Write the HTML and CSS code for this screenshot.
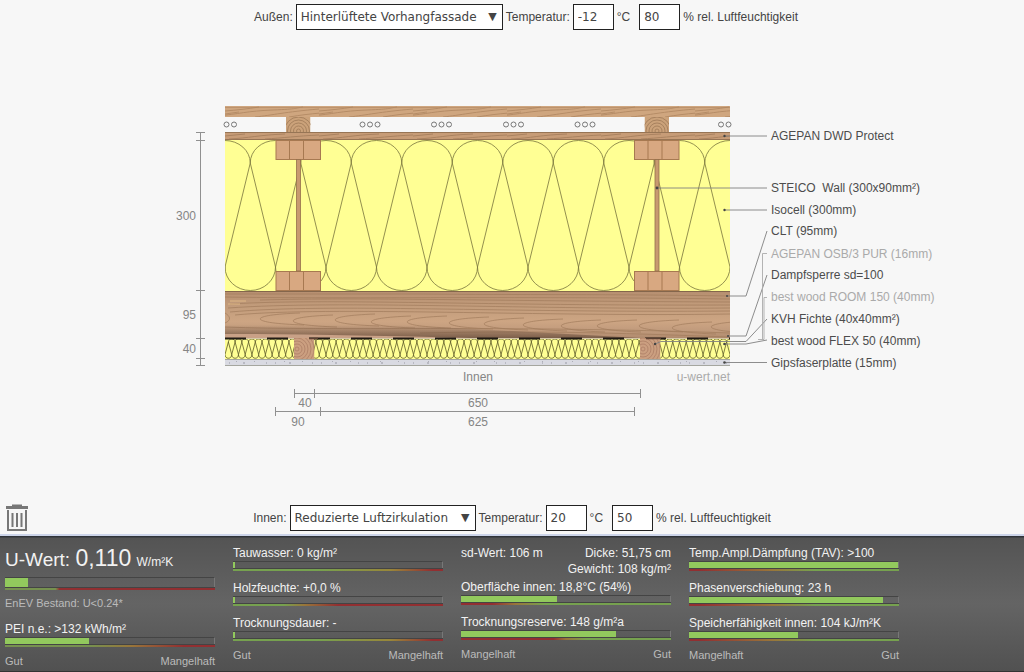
FILE: index.html
```html
<!DOCTYPE html>
<html lang="de">
<head>
<meta charset="utf-8">
<title>U-Wert-Rechner</title>
<link rel="stylesheet" href="styles.css">
</head>
<body>
<form class="climate climate-outside">
  <label for="out-type">Außen:</label>
  <span class="select select-outside"><select id="out-type"><option>Hinterlüftete Vorhangfassade</option></select><span class="arrow" aria-hidden="true">▼</span></span>
  <label for="out-temp">Temperatur:</label>
  <input id="out-temp" type="text" value="-12"><span class="unit">°C</span>
  <input id="out-hum" type="text" value="80"><label for="out-hum">% rel. Luftfeuchtigkeit</label>
</form>

<main class="stage">
<svg class="section" viewBox="64 95 896 340" role="img" aria-label="Querschnitt des Bauteils">
  <defs>
    <path id="loop" d="M0 127A25.250 23.500 0 0 0 50.500 127L25.250 23L0 127M25.250 23A25.250 22.500 0 0 1 75.750 23"/>
    <path id="flex" d="M0 16.500C0 21.500 6.733 21.500 6.733 16.500L3.367 4L0 16.500M3.367 4C3.367 0 10.100 0 10.100 4"/>
    <g id="flex5"><use href="#flex"/><use href="#flex" x="6.733"/><use href="#flex" x="13.467"/><use href="#flex" x="20.200"/><use href="#flex" x="26.933"/></g>
    <g id="flex25"><use href="#flex5"/><use href="#flex5" x="33.667"/><use href="#flex5" x="67.333"/><use href="#flex5" x="101"/><use href="#flex5" x="134.667"/></g>
    <clipPath id="isoClip"><rect x="225" y="140" width="505" height="151"/></clipPath>
    <clipPath id="flexClip"><rect x="225" y="338" width="505" height="21"/></clipPath>
    <pattern id="grain" patternUnits="userSpaceOnUse" x="225" y="106" width="94" height="11">
      <rect width="94" height="11" fill="#cfa67f"/>
      <path d="M0 1.500H94" stroke="#bd936d"/>
      <path d="M-8 10C14 8 22 5 48 4S70 2 78 1M30 11C48 9 60 6 94 3M64 11C76 9 84 8 96 7M0 5C12 4 22 3 34 1M0 8L14 6" fill="none" stroke="#ae8560" stroke-width=".8"/>
    </pattern>
    <pattern id="grainFine" patternUnits="userSpaceOnUse" x="225" y="132" width="94" height="8">
      <rect width="94" height="8" fill="#c79c77"/>
      <path d="M0 .5H94M0 7.500H94" stroke="#977555" stroke-width="1"/>
      <path d="M4 7C24 6 34 3 60 2M40 7C58 6 72 4 94 3M0 4L20 2" fill="none" stroke="#a27b59" stroke-width=".8"/>
    </pattern>
    <linearGradient id="clt" x2="0" y2="1">
      <stop offset="0" stop-color="#b68f70"/><stop offset=".35" stop-color="#c39d7c"/>
      <stop offset=".65" stop-color="#cda583"/><stop offset=".85" stop-color="#c09a7c"/>
      <stop offset="1" stop-color="#b08a6d"/>
    </linearGradient>
    <linearGradient id="shade" x2="0" y2="1">
      <stop offset="0" stop-color="#6d5240" stop-opacity="0"/><stop offset="1" stop-color="#6d5240" stop-opacity=".75"/>
    </linearGradient>
    <clipPath id="cltClip"><rect x="225" y="291" width="505" height="47"/></clipPath>
    <g id="tongue"><path d="M0 0C1-3 14-5 40-6M0 0C2 3 16 5 44 6"/></g>
    <g id="batten">
      <rect width="24.500" height="15" fill="#cba27a"/>
      <g fill="none" stroke="#a37e5b" stroke-width=".9"><circle cx="12.500" cy="14" r="2"/><circle cx="12.500" cy="14" r="5"/><circle cx="12.500" cy="14" r="8"/><circle cx="12.500" cy="14" r="11"/><circle cx="12.500" cy="14" r="14"/></g>
    </g>
    <clipPath id="battenClip"><rect width="24.500" height="15"/></clipPath>
    <g id="kvh">
      <rect width="20.500" height="21" fill="#cb9f80"/>
      <g fill="none" stroke="#ad7f66" stroke-width=".8"><circle cx="3" cy="11" r="2"/><circle cx="3" cy="11" r="5"/><circle cx="3" cy="11" r="8"/><circle cx="3" cy="11" r="11"/><circle cx="3" cy="11" r="14"/><circle cx="3" cy="11" r="17"/></g>
    </g>
    <clipPath id="kvhClip"><rect width="20.500" height="21"/></clipPath>
    <g id="flange">
      <rect x=".5" y=".5" width="44.500" height="19" fill="#d8a881" stroke="#a77951"/>
      <path d="M14 0V19M28 0V19" stroke="#a77951"/>
    </g>
    <g id="joist">
      <use href="#flange"/><use href="#flange" y="131"/>
      <rect x="21" y="19.500" width="4" height="111.500" fill="#c89a70" stroke="#95704b" stroke-width=".8"/>
    </g>
    <g id="vents"><circle r="2.500"/><circle cx="7.500" r="2.500"/></g>
    <g id="vents3"><use href="#vents"/><circle cx="15" r="2.500"/></g>
  </defs>

  <rect x="225" y="106" width="505" height="11" fill="url(#grain)"/>
  <g fill="none" stroke="#777" stroke-width="1">
    <use href="#vents" x="226.500" y="124.500"/><use href="#vents3" x="362.500" y="124.500"/>
    <use href="#vents3" x="434" y="124.500"/><use href="#vents3" x="506" y="124.500"/>
    <use href="#vents3" x="577.500" y="124.500"/><use href="#vents" x="721" y="124.500"/>
  </g>
  <g transform="translate(286 117)" clip-path="url(#battenClip)"><use href="#batten"/></g>
  <g transform="translate(644.500 117)" clip-path="url(#battenClip)"><use href="#batten"/></g>
  <rect x="225" y="132" width="505" height="8" fill="url(#grainFine)"/>
  <rect x="225" y="140" width="505" height="151" fill="#ffff94"/>
  <g clip-path="url(#isoClip)" fill="none" stroke="#77733c" stroke-width=".8">
    <use href="#loop" x="174.500" y="140"/><use href="#loop" x="225" y="140"/><use href="#loop" x="275.500" y="140"/><use href="#loop" x="326" y="140"/><use href="#loop" x="376.500" y="140"/><use href="#loop" x="427" y="140"/><use href="#loop" x="477.500" y="140"/><use href="#loop" x="528" y="140"/><use href="#loop" x="578.500" y="140"/><use href="#loop" x="629" y="140"/><use href="#loop" x="679.500" y="140"/>
  </g>
  <use href="#joist" x="275.500" y="140"/><use href="#joist" x="634" y="140"/>

  <rect x="225" y="291" width="505" height="47" fill="url(#clt)"/>
  <g clip-path="url(#cltClip)">
    <path d="M225 291.500H730" stroke="#84664c"/>
    <g fill="none" stroke="#a17b5c" stroke-width=".7">
      <path d="M225 294H420C520 295 610 294 730 296M225 297C330 299 500 296 730 299M260 300C370 297 470 301 730 302M230 304C330 298 480 306 730 305M228 308C340 300 530 310 730 308M230 312C330 303 500 313 730 311M235 315C330 306 540 317 730 314"/>
      <path d="M225 313C230 316 232 320 225 323M225 327C330 331 500 325 730 333M420 333C550 330 640 334 730 337"/>
      <use href="#tongue" x="260" y="319"/><use href="#tongue" x="293" y="321"/><use href="#tongue" x="335" y="320"/><use href="#tongue" x="371" y="322"/><use href="#tongue" x="407" y="322"/><use href="#tongue" x="449" y="323"/><use href="#tongue" x="484" y="324"/><use href="#tongue" x="523" y="325"/><use href="#tongue" x="561" y="326"/><use href="#tongue" x="597" y="326"/><use href="#tongue" x="639" y="326"/><use href="#tongue" x="672" y="328"/><use href="#tongue" x="711" y="327"/>
    </g>
    <path d="M230 301H246M228 304H240" stroke="#dfb786"/>
    <path d="M225 325H400L640 338H225Z" fill="url(#shade)"/>
    <path d="M225 334C300 334 380 336 470 338H225Z" fill="#c9a187"/>
  </g>
  <rect x="225" y="338" width="505" height="21" fill="#ffff94"/>
  <g clip-path="url(#flexClip)" fill="none" stroke="#5d5b28" stroke-width=".8">
    <use href="#flex25" x="225" y="338"/><use href="#flex25" x="393.333" y="338"/><use href="#flex25" x="561.667" y="338"/>
  </g>
  <path d="M225 338.500H730" stroke="#d4c7a8"/>
  <path d="M225 338.500H730" stroke="#211b14" stroke-width="2" stroke-dasharray="21 21"/>
  <g transform="translate(294 338)" clip-path="url(#kvhClip)"><use href="#kvh"/></g>
  <g transform="translate(640 338)" clip-path="url(#kvhClip)"><use href="#kvh"/></g>
  <path d="M309 338.500H318M646 338.500H661" stroke="#5c4033" stroke-width="1.500"/>
  <rect x="225" y="359" width="505" height="7" fill="#d9dae2"/>
  <path d="M225 359.500H730M225 365.500H730" stroke="#a5a69f"/>
  <path d="M229 363H730" stroke="#9899a3" stroke-dasharray="1 13 2 21 1 8"/>
  <path d="M236 361.500H730" stroke="#adaeb7" stroke-dasharray="1 17 1 29"/>

  <g fill="none" stroke="#909090" stroke-width="1">
    <path d="M200.500 132V366M196 132.500H205M196 140.500H205M196 290.500H205M196 338.500H205M196 358.500H205M196 365.500H205"/>
    <path d="M294.500 393.500H640.500M294.500 389V398M314.500 389V398M640.500 389V398M275.500 411.500H634.500M275.500 407V416M320.500 407V416M634.500 407V416"/>
  </g>
  <g fill="none" stroke="#808080" stroke-width=".9">
    <path d="M724 136H767M657 188H767M724 210H767M727 296H746L767 231M728 336H746L767 275M655 344L661 341.500H746L767 319M724 344H746L767 340M724 362.500H767"/>
    <path d="M767 253.500H762.500V339.500M767 297.500H764V339.500H758" stroke="#aaa"/>
  </g>
  <g fill="#444"><circle cx="724.500" cy="136" r="1.200"/><circle cx="657" cy="188" r="1.400"/><circle cx="724.500" cy="210" r="1.200"/><circle cx="727" cy="296" r="1"/><circle cx="728" cy="336" r="1"/><circle cx="655" cy="344" r="1.200"/><circle cx="724.500" cy="344" r="1.300"/><circle cx="724.500" cy="362.500" r="1.300"/></g>

  <g class="dimension">
    <text class="end" x="196" y="220">300</text><text class="end" x="196" y="319">95</text><text class="end" x="196" y="353">40</text>
    <text class="mid" x="305" y="407">40</text><text class="mid" x="478" y="407">650</text>
    <text class="mid" x="298" y="426">90</text><text class="mid" x="478" y="426">625</text>
    <text class="mid" x="478" y="381">Innen</text><text class="end source" x="730" y="381">u-wert.net</text>
  </g>
  <g class="layer">
    <text x="771" y="140">AGEPAN DWD Protect</text>
    <text x="771" y="192">STEICO&#160; Wall (300x90mm²)</text>
    <text x="771" y="214">Isocell (300mm)</text>
    <text x="771" y="235">CLT (95mm)</text>
    <text class="inactive" x="771" y="258">AGEPAN OSB/3 PUR (16mm)</text>
    <text x="771" y="279">Dampfsperre sd=100</text>
    <text class="inactive" x="771" y="301">best wood ROOM 150 (40mm)</text>
    <text x="771" y="323">KVH Fichte (40x40mm²)</text>
    <text x="771" y="345">best wood FLEX 50 (40mm)</text>
    <text x="771" y="367">Gipsfaserplatte (15mm)</text>
  </g>
</svg>
</main>

<div class="inside-row">
  <button class="trash" type="button" aria-label="Löschen">
    <svg width="24" height="28" viewBox="0 0 24 28" fill="none" stroke="#777" aria-hidden="true"><path d="M1 3.500H23" stroke-width="3"/><path d="M7 1.500H17" stroke-width="2"/><path d="M3 6V26H21V6" stroke-width="2"/><path d="M7.500 9V23M12 9V23M16.500 9V23" stroke-width="2"/></svg>
  </button>
  <form class="climate">
    <label for="in-type">Innen:</label>
    <span class="select select-inside"><select id="in-type"><option>Reduzierte Luftzirkulation</option></select><span class="arrow" aria-hidden="true">▼</span></span>
    <label for="in-temp">Temperatur:</label>
    <input id="in-temp" type="text" value="20"><span class="unit">°C</span>
    <input id="in-hum" type="text" value="50"><label for="in-hum">% rel. Luftfeuchtigkeit</label>
  </form>
</div>

<footer class="results">
  <section class="column">
    <h1 class="uvalue">U-Wert: <strong>0,110</strong> <small>W/m²K</small></h1>
    <div class="meter large"><div class="track"><div class="fill" style="width:11%"></div></div><div class="scale scale-u"></div></div>
    <p class="note">EnEV Bestand: U&lt;0.24*</p>
    <p class="value">PEI n.e.: &gt;132 kWh/m²</p>
    <div class="meter"><div class="track"><div class="fill" style="width:40%"></div></div><div class="scale scale-late"></div></div>
    <div class="legend"><span>Gut</span><span>Mangelhaft</span></div>
  </section>
  <section class="column">
    <p class="value">Tauwasser: 0 kg/m²</p>
    <div class="meter"><div class="track"><div class="fill" style="width:1%"></div></div><div class="scale scale-last"></div></div>
    <p class="value">Holzfeuchte: +0,0 %</p>
    <div class="meter"><div class="track"><div class="fill" style="width:1%"></div></div><div class="scale scale-early"></div></div>
    <p class="value">Trocknungsdauer: -</p>
    <div class="meter"><div class="track"><div class="fill" style="width:1%"></div></div><div class="scale scale-last"></div></div>
    <div class="legend"><span>Gut</span><span>Mangelhaft</span></div>
  </section>
  <section class="column">
    <div class="facts"><span>sd-Wert: 106 m</span><span class="right">Dicke: 51,75 cm<br>Gewicht: 108 kg/m²</span></div>
    <p class="value">Oberfläche innen: 18,8°C (54%)</p>
    <div class="meter"><div class="track"><div class="fill" style="width:46%"></div></div><div class="scale scale-surface"></div></div>
    <p class="value">Trocknungsreserve: 148 g/m²a</p>
    <div class="meter"><div class="track"><div class="fill" style="width:74%"></div></div><div class="scale scale-reserve"></div></div>
    <div class="legend"><span>Mangelhaft</span><span>Gut</span></div>
  </section>
  <section class="column">
    <p class="value">Temp.Ampl.Dämpfung (TAV): &gt;100</p>
    <div class="meter"><div class="track"><div class="fill" style="width:100%"></div></div><div class="scale scale-heat"></div></div>
    <p class="value">Phasenverschiebung: 23 h</p>
    <div class="meter"><div class="track"><div class="fill" style="width:93%"></div></div><div class="scale scale-heat"></div></div>
    <p class="value">Speicherfähigkeit innen: 104 kJ/m²K</p>
    <div class="meter"><div class="track"><div class="fill" style="width:52%"></div></div><div class="scale scale-heat"></div></div>
    <div class="legend"><span>Mangelhaft</span><span>Gut</span></div>
  </section>
</footer>
</body>
</html>
```
FILE: styles.css
```css
* { box-sizing: border-box; }
body {
  margin: 0;
  min-height: 100vh;
  display: flex;
  flex-direction: column;
  background: #f7f7f7;
  color: #444;
  font: 12px/14px "Liberation Sans", Arial, sans-serif;
}
p, h1 { margin: 0; font-weight: normal; }

.climate { display: flex; align-items: center; justify-content: center; gap: 3px; }
.climate-outside { padding: 4px 0 0 28px; }
.climate input, .climate select {
  height: 26px;
  border: 1px solid #222;
  border-radius: 0;
  background: #fff;
  color: #444;
  font: 12px "DejaVu Sans", Verdana, sans-serif;
}
.climate input { width: 41px; padding: 0 4px; }
.unit { margin-right: 6px; }
.select { position: relative; display: flex; }
.select select { width: 100%; padding: 0 4px; appearance: none; }
.select-outside { width: 207px; }
.select-inside { width: 186px; }
.arrow { position: absolute; right: 6px; top: 6px; font: 11px/14px "DejaVu Sans", sans-serif; pointer-events: none; }

.stage { flex: 1; padding: 65px 0 16px; }
.section { display: block; width: 100%; max-width: 896px; margin: 0 auto; }
.section text { font-size: 12px; }
.dimension { fill: #858585; }
.end { text-anchor: end; }
.mid { text-anchor: middle; }
.layer { fill: #4c4c4c; }
.inactive, .source { fill: #aaa; }

.inside-row { display: grid; grid-template-columns: 1fr auto 1fr; align-items: center; padding-bottom: 2px; }
.trash { justify-self: start; display: flex; margin-left: 5px; padding: 0; border: 0; background: none; }

.results {
  display: grid;
  grid-template-columns: repeat(4, minmax(0, 210px));
  gap: 18px;
  min-height: 138px;
  padding: 8px 5px 0;
  border-top: 2px solid #cdd5ea;
  border-bottom: 1px solid #333;
  background: linear-gradient(#30343a 1px, #545454 2px, #646464 50%, #515151);
  color: #f2f2f2;
}
.value { height: 17px; padding-top: 2px; }
.meter { height: 18px; }
.track { height: 7px; border-top: 1px solid #444; border-right: 1px solid #777; }
.fill { height: 6px; background: #92c95d; }
.scale { height: 3px; border-top: 1px solid #444; }
.legend { display: flex; justify-content: space-between; color: #bbb; font-size: 11px; line-height: 12px; }
.uvalue { height: 33px; font-size: 19px; line-height: 28px; }
.uvalue strong { font-size: 23px; font-weight: normal; }
.uvalue small { font-size: 12px; }
.large { height: 19px; }
.large .track { height: 10px; }
.large .fill { height: 9px; }
.note { height: 24px; color: #bbb; font-size: 11px; }
.facts { display: flex; justify-content: space-between; height: 34px; padding-top: 1px; line-height: 16px; }
.right { text-align: right; }
.scale-u { background: linear-gradient(90deg, #76914f 24%, #922f31 26%); }
.scale-late { background: linear-gradient(90deg, #76914f 40%, #98763a 60%, #922f31 85%); }
.scale-last { background: linear-gradient(90deg, #76a14f 40%, #98863a 75%, #922f31 95%); }
.scale-early { background: linear-gradient(90deg, #76a14f 24%, #98763a 34%, #922f31 50%); }
.scale-surface { background: linear-gradient(90deg, #922f31 15%, #98763a 26%, #76a14f 40%); }
.scale-reserve { background: linear-gradient(90deg, #922f31 44%, #98763a 50%, #76a14f 60%); }
.scale-heat { background: linear-gradient(90deg, #922f31 5%, #98763a 40%, #76a14f 60%); }
```
